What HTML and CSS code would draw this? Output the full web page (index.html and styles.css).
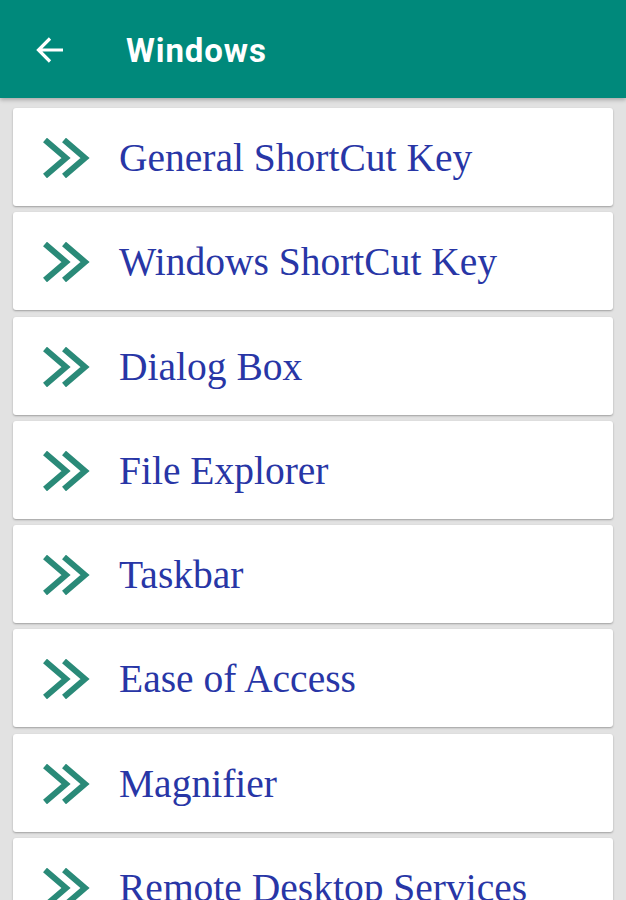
FILE: index.html
```html
<!DOCTYPE html>
<html>
<head>
<meta charset="utf-8">
<link rel="stylesheet" href="styles.css">
</head>
<body>
<header class="appbar">
  <svg class="back" width="30" height="30" viewBox="0 0 30 30"><path d="M28 15H4M15 3.5L3.5 15 15 26.5" fill="none" stroke="#fff" stroke-width="3.2" stroke-linecap="butt" stroke-linejoin="miter"/></svg>
  <h1 class="title">Windows</h1>
</header>
<main class="list">
  <div class="card"><svg class="chev" viewBox="0 0 48 40" width="48" height="40"><path d="M3 2L24 20 3 38M22 2L43 20 22 38" fill="none" stroke="#2a8a78" stroke-width="6"/></svg><span class="label">General ShortCut Key</span></div>
  <div class="card"><svg class="chev" viewBox="0 0 48 40" width="48" height="40"><path d="M3 2L24 20 3 38M22 2L43 20 22 38" fill="none" stroke="#2a8a78" stroke-width="6"/></svg><span class="label">Windows ShortCut Key</span></div>
  <div class="card"><svg class="chev" viewBox="0 0 48 40" width="48" height="40"><path d="M3 2L24 20 3 38M22 2L43 20 22 38" fill="none" stroke="#2a8a78" stroke-width="6"/></svg><span class="label">Dialog Box</span></div>
  <div class="card"><svg class="chev" viewBox="0 0 48 40" width="48" height="40"><path d="M3 2L24 20 3 38M22 2L43 20 22 38" fill="none" stroke="#2a8a78" stroke-width="6"/></svg><span class="label">File Explorer</span></div>
  <div class="card"><svg class="chev" viewBox="0 0 48 40" width="48" height="40"><path d="M3 2L24 20 3 38M22 2L43 20 22 38" fill="none" stroke="#2a8a78" stroke-width="6"/></svg><span class="label">Taskbar</span></div>
  <div class="card"><svg class="chev" viewBox="0 0 48 40" width="48" height="40"><path d="M3 2L24 20 3 38M22 2L43 20 22 38" fill="none" stroke="#2a8a78" stroke-width="6"/></svg><span class="label">Ease of Access</span></div>
  <div class="card"><svg class="chev" viewBox="0 0 48 40" width="48" height="40"><path d="M3 2L24 20 3 38M22 2L43 20 22 38" fill="none" stroke="#2a8a78" stroke-width="6"/></svg><span class="label">Magnifier</span></div>
  <div class="card"><svg class="chev" viewBox="0 0 48 40" width="48" height="40"><path d="M3 2L24 20 3 38M22 2L43 20 22 38" fill="none" stroke="#2a8a78" stroke-width="6"/></svg><span class="label">Remote Desktop Services</span></div>
</main>
</body>
</html>
```
FILE: styles.css
```css
html, body {
  margin: 0;
  padding: 0;
  background: #e2e2e2;
  overflow: hidden;
  height: 900px;
}
.appbar {
  height: 98px;
  background: #00897b;
  display: flex;
  align-items: center;
  box-shadow: 0 2px 4px rgba(0,0,0,0.25);
  position: relative;
  z-index: 1;
}
.back {
  margin-left: 35px;
  margin-top: 2px;
}
.title {
  margin: 0 0 0 61px;
  margin-top: 2px;
  font-family: Roboto, "Liberation Sans", sans-serif;
  font-weight: 700;
  font-size: 33px;
  color: #fff;
  letter-spacing: 0.9px;
}
.list {
  padding: 10px 13px 0 13px;
  display: flex;
  flex-direction: column;
  gap: 6.3px;
}
.card {
  height: 98px;
  flex: none;
  background: #fff;
  border-radius: 3px;
  box-shadow: 0 1px 2px rgba(0,0,0,0.3);
  display: flex;
  align-items: center;
  box-sizing: border-box;
  padding-left: 29px;
}
.chev {
  flex: none;
  margin-top: 2px;
}
.label {
  margin-left: 29px;
  font-family: "Liberation Serif", "DejaVu Serif", serif;
  font-size: 39.5px;
  color: #2836a6;
  margin-top: 2px;
}
```
